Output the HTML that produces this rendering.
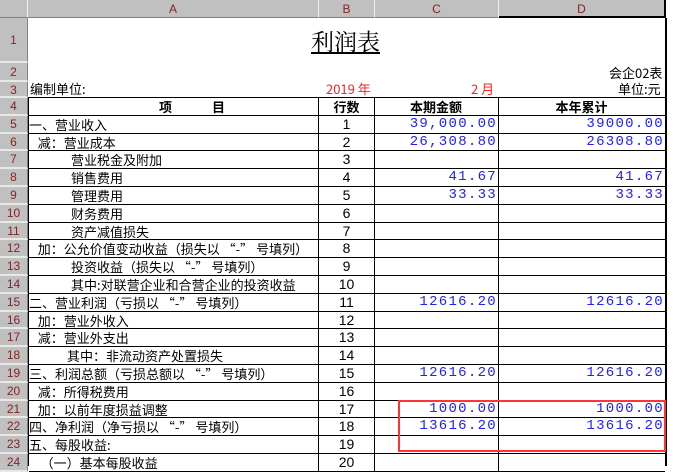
<!DOCTYPE html>
<html><head><meta charset="utf-8"><style>
body{margin:0;width:673px;height:466px;overflow:hidden;background:#fff;font-family:"Noto Sans CJK SC","WenQuanYi Zen Hei",sans-serif;font-size:13px;color:#000}
.a{position:absolute;box-sizing:border-box}
.hd{background:#c0c0c0;border-right:1px solid #f0f0f0;border-bottom:1px solid #808080;color:#8b2020;font-size:12px;text-align:center;font-family:"Liberation Sans",sans-serif}
.rh{left:0;width:28px;background:#c0c0c0;border-bottom:2px solid #e8e8e8;border-right:1px solid #808080;color:#8b2020;font-size:12px;line-height:17px;text-align:center;font-family:"Liberation Sans",sans-serif}
.c{border-right:1px solid #000;border-bottom:1px solid #000;white-space:nowrap;line-height:17px;overflow:hidden}
.n{color:#2020ff;text-align:right;padding-right:1px;font-family:"Liberation Mono",monospace;font-size:14px;letter-spacing:1.3px}
.m{text-align:center;font-family:"Liberation Sans",sans-serif}
</style></head><body>
<div class="a hd" style="left:0;top:0;width:28px;height:18px"></div>
<div class="a hd" style="left:28px;top:0;width:291px;height:18px;line-height:18px">A</div>
<div class="a hd" style="left:319px;top:0;width:56px;height:18px;line-height:18px">B</div>
<div class="a hd" style="left:375px;top:0;width:124px;height:18px;line-height:18px">C</div>
<div class="a hd" style="left:499px;top:0;width:167px;height:18px;line-height:18px;border-bottom:2px solid #000;border-right:2px solid #000">D</div>
<div class="a rh" style="top:18px;height:45px;line-height:45px">1</div>
<div class="a rh" style="top:63px;height:19px;line-height:19px">2</div>
<div class="a rh" style="top:82px;height:16px;line-height:16px">3</div>
<div class="a" style="left:665px;top:18px;width:2px;height:448px;background:#000"></div>
<div class="a" style="left:311px;top:27px;font-family:'Noto Serif CJK SC',serif;font-size:23px;text-decoration:underline;line-height:28px">利润表</div>
<div class="a" style="left:609px;top:64px;line-height:17px">会企02表</div>
<div class="a" style="left:30px;top:81px;line-height:16px">编制单位:</div>
<div class="a" style="left:326px;top:81px;line-height:16px;color:#f22">2019 年</div>
<div class="a" style="left:471px;top:81px;line-height:16px;color:#f22">2 月</div>
<div class="a" style="left:618px;top:81px;line-height:16px">单位:元</div>
<div class="a" style="left:28px;top:97px;width:638px;height:1px;background:#000"></div>
<div class="a" style="left:28px;top:97px;width:1px;height:369px;background:#000"></div>
<div id="g"></div>
<script>
var rows=[
["<b style='padding-left:130px;letter-spacing:40px'>项目</b>","<b style='font-family:Noto Sans CJK SC,sans-serif'>行数</b>","<b style='display:block;text-align:center;color:#000;letter-spacing:0;font-size:13px;font-family:Noto Sans CJK SC,sans-serif'>本期金额</b>","<b style='display:block;text-align:center;color:#000;letter-spacing:0;font-size:13px;font-family:Noto Sans CJK SC,sans-serif'>本年累计</b>"],
["一、营业收入","1","39,000.00","39000.00"],
["&nbsp;&nbsp;&nbsp;减：营业成本","2","26,308.80","26308.80"],
["<span style='padding-left:42px'>营业税金及附加</span>","3","",""],
["<span style='padding-left:42px'>销售费用</span>","4","41.67","41.67"],
["<span style='padding-left:42px'>管理费用</span>","5","33.33","33.33"],
["<span style='padding-left:42px'>财务费用</span>","6","",""],
["<span style='padding-left:42px'>资产减值损失</span>","7","",""],
["&nbsp;&nbsp;&nbsp;加：公允价值变动收益（损失以 “-” 号填列）","8","",""],
["<span style='padding-left:42px'>投资收益（损失以 “-” 号填列）</span>","9","",""],
["<span style='padding-left:42px'>其中:对联营企业和合营企业的投资收益</span>","10","",""],
["二、营业利润（亏损以 “-” 号填列）","11","12616.20","12616.20"],
["&nbsp;&nbsp;&nbsp;加：营业外收入","12","",""],
["&nbsp;&nbsp;&nbsp;减：营业外支出","13","",""],
["<span style='padding-left:38px'>其中：非流动资产处置损失</span>","14","",""],
["三、利润总额（亏损总额以 “-” 号填列）","15","12616.20","12616.20"],
["&nbsp;&nbsp;&nbsp;减：所得税费用","16","",""],
["&nbsp;&nbsp;&nbsp;加：以前年度损益调整","17","1000.00","1000.00"],
["四、净利润（净亏损以 “-” 号填列）","18","13616.20","13616.20"],
["五、每股收益:","19","",""],
["&nbsp;&nbsp;&nbsp;&nbsp;（一）基本每股收益","20","",""]];
var h="",H=17.8;
rows.forEach(function(r,i){var t=98+i*H;
h+='<div class="a rh" style="top:'+t+'px;height:'+H+'px">'+(i+4)+'</div>';
h+='<div class="a c" style="left:29px;top:'+t+'px;width:290px;height:'+H+'px">'+r[0]+'</div>';
h+='<div class="a c m" style="left:319px;top:'+t+'px;width:56px;height:'+H+'px;'+(i?'font-size:14px':'')+'">'+r[1]+'</div>';
h+='<div class="a c n" style="left:375px;top:'+t+'px;width:124px;height:'+H+'px">'+r[2]+'</div>';
h+='<div class="a c n" style="left:499px;top:'+t+'px;width:166px;height:'+H+'px;border-right:none">'+r[3]+'</div>';});
h+='<div class="a" style="left:398px;top:400px;width:268px;height:52px;border:2px solid #f33"></div>';
document.getElementById("g").innerHTML=h;
</script>
</body></html>
